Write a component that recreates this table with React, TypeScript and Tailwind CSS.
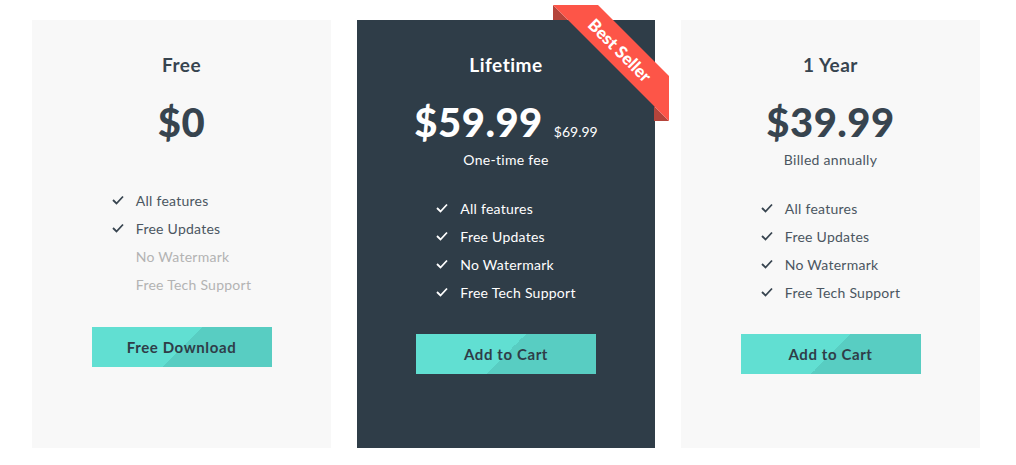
import React from "react";

type Feature = { label: string; enabled: boolean };

type Plan = {
  title: string;
  price: string;
  oldPrice?: string;
  note?: string;
  features: Feature[];
  cta: string;
  dark?: boolean;
  ribbon?: boolean;
};

const allOn = ["All features", "Free Updates", "No Watermark", "Free Tech Support"];

const plans: Plan[] = [
  {
    title: "Free",
    price: "$0",
    features: allOn.map((label, i) => ({ label, enabled: i < 2 })),
    cta: "Free Download",
  },
  {
    title: "Lifetime",
    price: "$59.99",
    oldPrice: "$69.99",
    note: "One-time fee",
    features: allOn.map((label) => ({ label, enabled: true })),
    cta: "Add to Cart",
    dark: true,
    ribbon: true,
  },
  {
    title: "1 Year",
    price: "$39.99",
    note: "Billed annually",
    features: allOn.map((label) => ({ label, enabled: true })),
    cta: "Add to Cart",
  },
];

function Check({ dark }: { dark?: boolean }) {
  return (
    <svg width="12" height="10" viewBox="0 0 12 10" className="shrink-0">
      <polyline
        points="1,5 4.5,8.5 11,1.5"
        fill="none"
        stroke={dark ? "#ffffff" : "#37444f"}
        strokeWidth="1.8"
      />
    </svg>
  );
}

function Ribbon() {
  return (
    <svg
      width="116"
      height="116"
      viewBox="0 0 116 116"
      className="absolute left-[196px] top-[-15px]"
    >
      <polygon points="0,0 0,15 15,15" fill="#b4443b" />
      <polygon points="101,101 101,116 116,116" fill="#b4443b" />
      <polygon points="0,0 45,0 116,71 116,116" fill="#fd5548" />
      <text
        x="67"
        y="45"
        fill="#ffffff"
        fontSize="17"
        fontWeight="900"
        textAnchor="middle"
        dominantBaseline="central"
        transform="rotate(45 67 45)"
        fontFamily="Lato, 'Open Sans', sans-serif"
      >
        Best Seller
      </text>
    </svg>
  );
}

function PlanCard({ plan, width }: { plan: Plan; width: string }) {
  const dark = plan.dark;
  return (
    <div
      className={`relative ${width} h-[428px] flex flex-col items-center pt-[33px] ${
        dark ? "bg-[#2f3d48] text-white" : "bg-[#f8f8f8] text-[#37444f]"
      }`}
    >
      {plan.ribbon && <Ribbon />}
      <h2 className="text-[19px] leading-[24px] font-bold tracking-[0.5px]">{plan.title}</h2>
      <div className="flex items-baseline mt-[21px]">
        <span className="text-[40px] leading-[48px] font-black tracking-[0.5px]">{plan.price}</span>
        {plan.oldPrice && (
          <span className="ml-[11px] text-[14px]">{plan.oldPrice}</span>
        )}
      </div>
      {plan.note && (
        <p
          className={`mt-[4px] text-[14px] leading-[20px] tracking-[0.3px] ${
            dark ? "text-white" : "text-[#4b5661]"
          }`}
        >
          {plan.note}
        </p>
      )}
      <ul className={plan.note ? "mt-[24px]" : "mt-[40px]"}>
        {plan.features.map((f) => (
          <li key={f.label} className="flex items-center h-[28px] text-[14px] tracking-[0.25px]">
            <span className="w-[12px] mr-[12px] flex">
              {f.enabled && <Check dark={dark} />}
            </span>
            <span
              className={
                f.enabled
                  ? dark
                    ? "text-white"
                    : "text-[#4b5661]"
                  : "text-[#b3b3b3]"
              }
            >
              {f.label}
            </span>
          </li>
        ))}
      </ul>
      <button
        className={`${plan.note ? "mt-[28px]" : "mt-[29px]"} w-[180px] h-[40px] text-[15px] font-bold tracking-[0.6px] text-[#2f3d48] bg-[linear-gradient(135deg,#61dfd2_50%,#58cdc2_50%)]`}
      >
        {plan.cta}
      </button>
    </div>
  );
}

export default function App() {
  return (
    <div className="w-[1016px] h-[465px] bg-white font-['Lato','Open_Sans',sans-serif]">
      <div className="flex gap-[26px] pl-[32px] pt-[20px]">
        <PlanCard plan={plans[0]} width="w-[299px]" />
        <PlanCard plan={plans[1]} width="w-[298px]" />
        <PlanCard plan={plans[2]} width="w-[299px]" />
      </div>
    </div>
  );
}
